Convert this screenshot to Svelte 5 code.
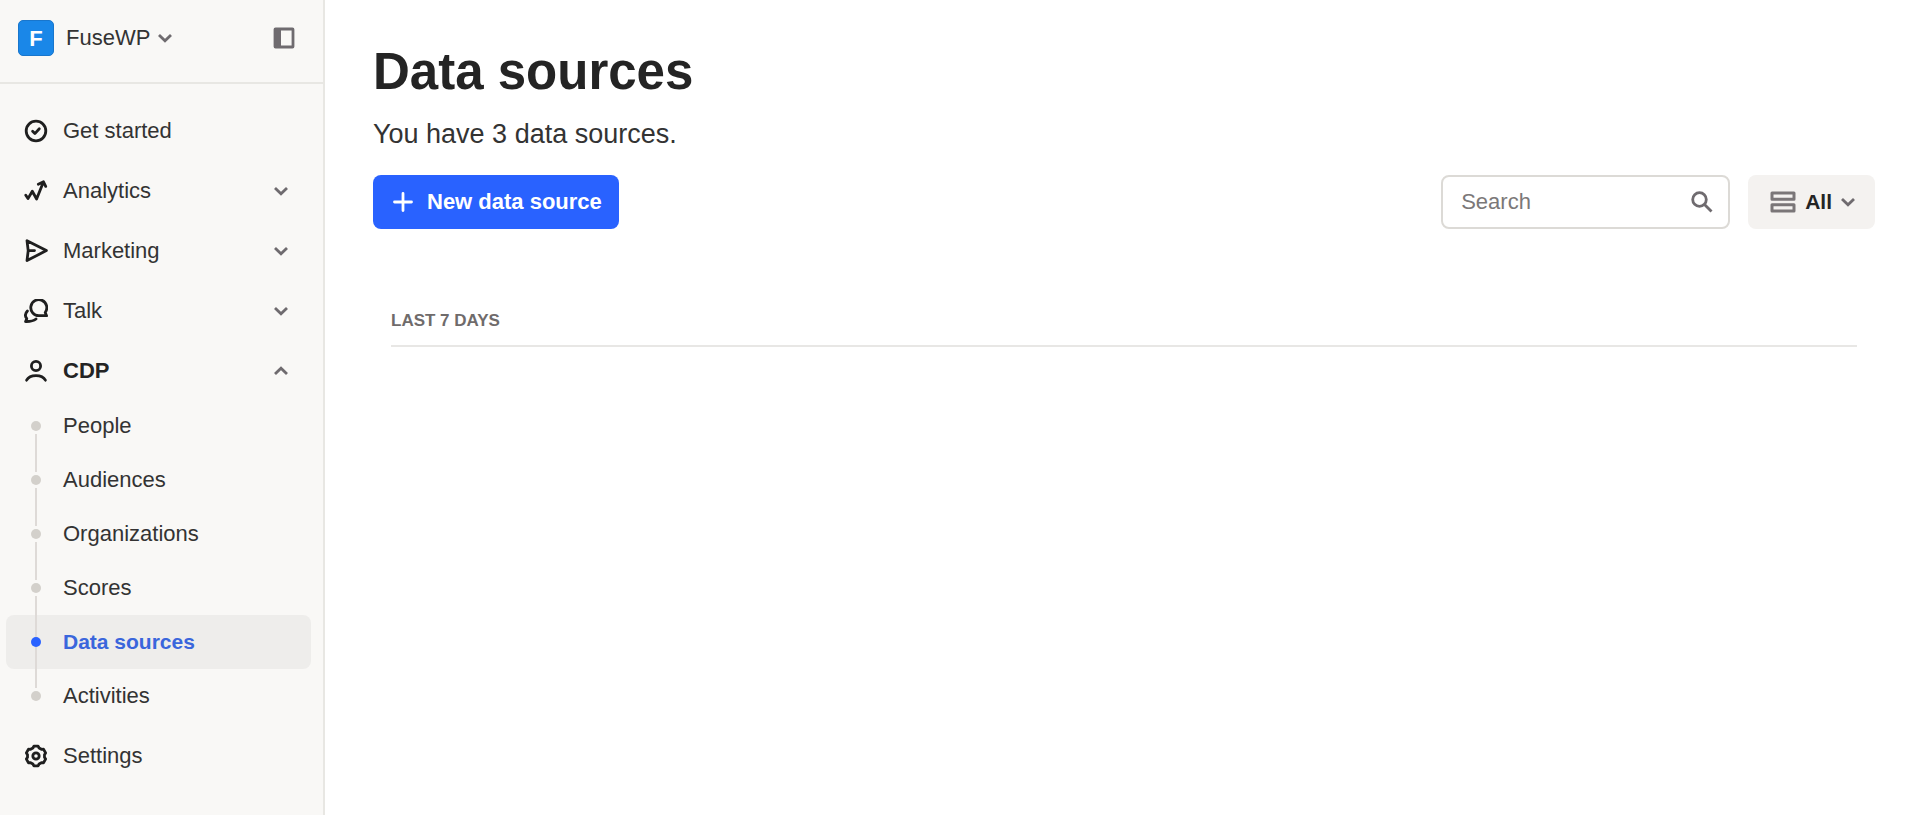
<script>
  let search = $state('');
  let active = $state('Data sources');

  let groups = $state([
    { label: 'Get started', icon: 'check' },
    { label: 'Analytics', icon: 'chart', open: false, children: [] },
    { label: 'Marketing', icon: 'send', open: false, children: [] },
    { label: 'Talk', icon: 'talk', open: false, children: [] },
    {
      label: 'CDP',
      icon: 'person',
      open: true,
      children: ['People', 'Audiences', 'Organizations', 'Scores', 'Data sources', 'Activities']
    },
    { label: 'Settings', icon: 'gear' }
  ]);

  // outline of the settings cog, six teeth around (12, 12)
  const cog = [];
  for (let i = 0; i < 6; i++) {
    for (const [offset, r] of [[-21, 8.6], [-12, 10.1], [12, 10.1], [21, 8.6]]) {
      const a = ((i * 60 - 90 + offset) * Math.PI) / 180;
      cog.push(`${(12 + r * Math.cos(a)).toFixed(2)},${(12 + r * Math.sin(a)).toFixed(2)}`);
    }
  }
</script>

{#snippet chevron(up = false)}
  <svg class="chevron" viewBox="0 0 14 10" aria-hidden="true">
    <path d={up ? 'M1 8 7 2.200 13 8' : 'M1 2 7 7.800 13 2'} />
  </svg>
{/snippet}

{#snippet icon(name)}
  <svg class="icon" viewBox="0 0 24 24" aria-hidden="true">
    {#if name === 'check'}
      <circle cx="12" cy="12" r="9.8" />
      <path d="M8.6 12.3l2.3 2.3 4.4-4.8" />
    {:else if name === 'chart'}
      <path d="M1.8 16.2 4 19.6 8.3 12.3 12.6 20 19.3 3.2M14.3 5.2l5.2-2.4 2.200 4.6" />
    {:else if name === 'send'}
      <path d="M3 1.7 22.4 11.6 3 21.6 4.2 11.6zM5 11.6h5.5" />
    {:else if name === 'talk'}
      <path d="M22.6 16.7H15a8 8 0 1 1 6.2-3.2z" />
      <path d="M3.4 12C1.2 14.4.9 17.3 2.8 19.6L1.6 22.5c4 .1 7.600-.2 10.400-2.500" />
    {:else if name === 'person'}
      <circle cx="12" cy="7" r="4.6" />
      <path d="M2.6 21.2c1.6-3 5-4.6 9.4-4.6s7.8 1.6 9.4 4.6" />
    {:else}
      <polygon points={cog.join(' ')} />
      <circle cx="12" cy="12" r="3.2" />
    {/if}
  </svg>
{/snippet}

<div class="app">
  <aside class="sidebar">
    <header class="account">
      <button class="account-switch">
        <span class="logo">F</span>
        <span>FuseWP</span>
        {@render chevron()}
      </button>
      <button class="collapse" aria-label="Collapse sidebar">
        <svg viewBox="0 0 22 22" aria-hidden="true">
          <rect x="2" y="2" width="18" height="18" rx="0.5" fill="none" stroke="currentColor" stroke-width="2.8" />
          <rect x="1" y="1" width="7" height="20" fill="currentColor" />
        </svg>
      </button>
    </header>

    <nav>
      <ul class="groups">
        {#each groups as group}
          <li>
            {#if group.children}
              <button class="item" class:open={group.open} aria-expanded={group.open} onclick={() => (group.open = !group.open)}>
                {@render icon(group.icon)}
                <span class="label">{group.label}</span>
                {@render chevron(group.open)}
              </button>
              {#if group.open && group.children.length}
                <ul class="children">
                  {#each group.children as child}
                    <li>
                      <a href="#top" class="item child" class:active={child === active} onclick={() => (active = child)}>
                        <span class="rail"><span class="dot"></span></span>
                        <span class="label">{child}</span>
                      </a>
                    </li>
                  {/each}
                </ul>
              {/if}
            {:else}
              <a href="#top" class="item">
                {@render icon(group.icon)}
                <span class="label">{group.label}</span>
              </a>
            {/if}
          </li>
        {/each}
      </ul>
    </nav>
  </aside>

  <main>
    <h1>Data sources</h1>
    <p class="summary">You have 3 data sources.</p>

    <div class="toolbar">
      <button class="primary">
        <svg viewBox="0 0 20 20" aria-hidden="true">
          <path d="M10 1.500v17M1.500 10h17" stroke="currentColor" stroke-width="2.800" stroke-linecap="round" />
        </svg>
        New data source
      </button>

      <div class="filters">
        <label class="search">
          <input type="text" placeholder="Search" aria-label="Search" bind:value={search} />
          <svg viewBox="0 0 24 24" aria-hidden="true">
            <circle cx="9.500" cy="9.500" r="6.800" />
            <path d="M14.500 14.500l7 7" />
          </svg>
        </label>
        <button class="filter">
          <svg class="rows" viewBox="0 0 26 22" aria-hidden="true">
            <rect x="2" y="2" width="22" height="6.300" />
            <rect x="2" y="13.700" width="22" height="6.300" />
          </svg>
          <span>All</span>
          {@render chevron()}
        </button>
      </div>
    </div>

    <section>
      <h2>Last 7 days</h2>
    </section>
  </main>
</div>

<style>
  :global(body) {
    margin: 0;
    background: #fff;
  }

  .app {
    display: flex;
    min-height: 100vh;
    font-family: 'Liberation Sans', Arial, sans-serif;
    font-size: 22px;
    color: #333;
  }

  button,
  input {
    font: inherit;
    color: inherit;
  }

  button {
    border: 0;
    background: none;
    padding: 0;
    cursor: pointer;
  }

  ul {
    list-style: none;
    margin: 0;
    padding: 0;
  }

  svg {
    display: block;
    flex: none;
  }

  /* sidebar */
  .sidebar {
    box-sizing: border-box;
    flex: none;
    width: 325px;
    background: #f9f8f6;
    border-right: 2px solid #e8e7e3;
  }

  .account {
    display: flex;
    align-items: center;
    justify-content: space-between;
    padding: 20px 28px 26px 18px;
    border-bottom: 2px solid #e8e7e3;
  }

  .account-switch {
    display: flex;
    align-items: center;
    gap: 12px;
  }

  .account-switch .chevron {
    margin-left: -4px;
  }

  .logo {
    box-sizing: border-box;
    width: 36px;
    height: 36px;
    border: 1px solid #1976cc;
    border-radius: 5px;
    background: #1a87e8;
    color: #fff;
    font-weight: 700;
    line-height: 36px;
    text-align: center;
  }

  .collapse svg {
    width: 22px;
    height: 22px;
    color: #6f6b6f;
  }

  nav {
    padding: 20px 12px 18px 6px;
  }

  .groups {
    display: flex;
    flex-direction: column;
    gap: 6px;
  }

  .children {
    padding-top: 1px;
  }

  .item {
    box-sizing: border-box;
    display: flex;
    align-items: center;
    gap: 15px;
    width: 100%;
    height: 54px;
    padding: 0 23px 0 18px;
    border-radius: 8px;
    color: #333;
    text-align: left;
    text-decoration: none;
  }

  .item .label {
    flex: 1;
  }

  .item.open {
    font-weight: 700;
    color: #242424;
  }

  .icon {
    width: 24px;
    height: 24px;
    fill: none;
    stroke: #1f1f1f;
    stroke-width: 2.8;
    stroke-linecap: round;
    stroke-linejoin: round;
  }

  .chevron {
    width: 14px;
    height: 10px;
    fill: none;
    stroke: #6f6b6f;
    stroke-width: 2.8;
    overflow: visible;
  }

  .item.active {
    background: #eeedeb;
    color: #3a66dc;
    font-size: 21px;
    font-weight: 700;
  }

  /* timeline next to the child links */
  .rail {
    display: flex;
    flex-direction: column;
    align-items: center;
    gap: 3px;
    width: 24px;
    height: 100%;
  }

  .rail::before,
  .rail::after {
    content: '';
    flex: 1;
    width: 2px;
    background: #dedad7;
  }

  .children li:first-child .rail::before,
  .children li:last-child .rail::after {
    background: none;
  }

  .dot {
    width: 10px;
    height: 10px;
    border-radius: 50%;
    background: #d3d0cb;
  }

  .active .rail {
    gap: 0;
  }

  .active .dot {
    background: #2962ff;
  }

  /* content */
  main {
    flex: 1;
    min-width: 0;
    padding: 42px 45px 40px 48px;
  }

  h1 {
    margin: 0;
    font-size: 51px;
    line-height: 60px;
    font-weight: 700;
    color: #242424;
  }

  .summary {
    margin: 14px 0 23px;
    font-size: 27px;
    line-height: 36px;
  }

  .toolbar,
  .filters {
    display: flex;
    align-items: center;
    gap: 18px;
  }

  .toolbar {
    justify-content: space-between;
  }

  .primary,
  .filter {
    display: flex;
    align-items: center;
    height: 54px;
    border-radius: 8px;
    font-weight: 700;
  }

  .primary {
    gap: 14px;
    padding: 0 17px 0 20px;
    background: #2962ff;
    color: #fff;
  }

  .primary svg {
    width: 20px;
    height: 20px;
  }

  .search {
    box-sizing: border-box;
    display: flex;
    align-items: center;
    width: 289px;
    height: 54px;
    padding: 0 14px 0 18px;
    border: 2px solid #dcdad6;
    border-radius: 8px;
  }

  .search input {
    flex: 1;
    min-width: 0;
    padding: 0;
    border: 0;
    outline: 0;
    background: none;
  }

  .search input::placeholder {
    color: #7b7878;
    opacity: 1;
  }

  .search svg {
    width: 24px;
    height: 24px;
    fill: none;
    stroke: #6f6b6f;
    stroke-width: 2.8;
  }

  .filter {
    gap: 9px;
    padding: 0 20px 0 22px;
    background: #f4f2f0;
    color: #242424;
    font-size: 21px;
  }

  .rows {
    width: 26px;
    height: 22px;
    fill: none;
    stroke: #7a7678;
    stroke-width: 3;
    stroke-linejoin: round;
  }

  section {
    margin: 80px 18px 0;
    border-bottom: 2px solid #e8e7e5;
  }

  h2 {
    margin: 0;
    padding-bottom: 12px;
    font-size: 17px;
    line-height: 24px;
    text-transform: uppercase;
    color: #6f6b6b;
  }
</style>
